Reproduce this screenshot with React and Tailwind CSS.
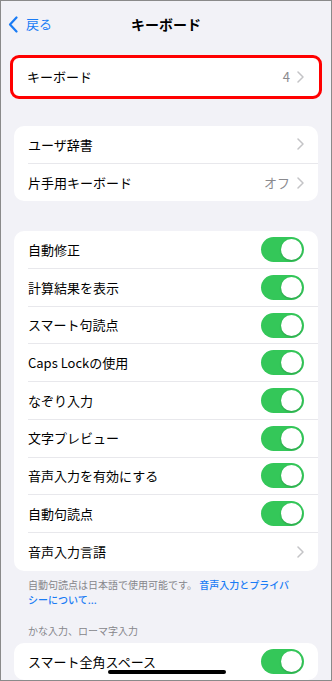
import React from "react";

const font = { fontFamily: '"Noto Sans CJK JP", "Noto Sans", sans-serif' };

function Chevron() {
  return (
    <svg width="7" height="12" viewBox="0 0 7 12" className="ml-[7px]">
      <path d="M1 1l5 5-5 5" fill="none" stroke="#c4c4c7" strokeWidth="1.5" strokeLinecap="round" strokeLinejoin="round" />
    </svg>
  );
}

function Toggle() {
  return (
    <div className="w-[43px] h-[25px] rounded-full bg-[#34c759] p-[2px] flex justify-end">
      <div className="w-[21px] h-[21px] rounded-full bg-white shadow-[0_1px_2px_rgba(0,0,0,0.2)]" />
    </div>
  );
}

function Row({ label, value, chevron, toggle, last }) {
  return (
    <div className="pl-[14px]">
      <div className={"h-[37.7px] flex items-center pr-[14px] " + (last ? "" : "border-b border-[#e8e8ec]")}>
        <span className="flex-1 text-[13px] text-black">{label}</span>
        {value && <span className="text-[13px] text-[#8a8a8e]">{value}</span>}
        {chevron && <Chevron />}
        {toggle && <Toggle />}
      </div>
    </div>
  );
}

export default function App() {
  const toggles = ["自動修正", "計算結果を表示", "スマート句読点", "Caps Lockの使用", "なぞり入力", "文字プレビュー", "音声入力を有効にする", "自動句読点"];
  return (
    <div style={font} className="w-[332px] h-[681px] bg-[#f2f2f7] border border-[#8a8a8a] overflow-hidden relative">
      <div className="h-[48px] flex items-center relative">
        <div className="flex items-center pl-[7px] text-[#1a7cf5] mt-[-2px]">
          <svg width="10" height="17" viewBox="0 0 10 17">
            <path d="M8.5 1.5L2 8.5l6.5 7" fill="none" stroke="#1a7cf5" strokeWidth="2.2" strokeLinecap="round" strokeLinejoin="round" />
          </svg>
          <span className="ml-[8px] text-[13px]">戻る</span>
        </div>
        <div className="absolute left-0 right-0 top-[13px] text-center text-[14px] font-bold text-black">キーボード</div>
      </div>

      <div className="mt-[6px] ml-[9px] w-[312px] h-[44px] border-[3px] border-[#ff0000] rounded-[9px] bg-white flex items-center pl-[14px] pr-[15px]">
        <span className="flex-1 text-[13px]">キーボード</span>
        <span className="text-[13px] text-[#8a8a8e]">4</span>
        <Chevron />
      </div>

      <div className="mt-[27px] ml-[13px] w-[304px] bg-white rounded-[10px]">
        <Row label="ユーザ辞書" chevron />
        <Row label="片手用キーボード" value="オフ" chevron last />
      </div>

      <div className="mt-[30px] ml-[13px] w-[304px] bg-white rounded-[10px]">
        {toggles.map((t) => (
          <Row key={t} label={t} toggle />
        ))}
        <Row label="音声入力言語" chevron last />
      </div>

      <div className="ml-[27px] mr-[38px] mt-[6px] text-[10px] leading-[15px] text-[#86868b]">
        自動句読点は日本語で使用可能です。 <span className="text-[#1a7cf5] font-medium">音声入力とプライバシーについて...</span>
      </div>

      <div className="ml-[27px] mt-[16px] text-[10px] leading-[15px] text-[#86868b]">かな入力、ローマ字入力</div>

      <div className="mt-[5px] ml-[13px] w-[304px] bg-white rounded-[10px]">
        <Row label="スマート全角スペース" toggle last />
      </div>

      <div className="absolute left-[107px] bottom-[6px] w-[118px] h-[4px] rounded-full bg-black" />
    </div>
  );
}
